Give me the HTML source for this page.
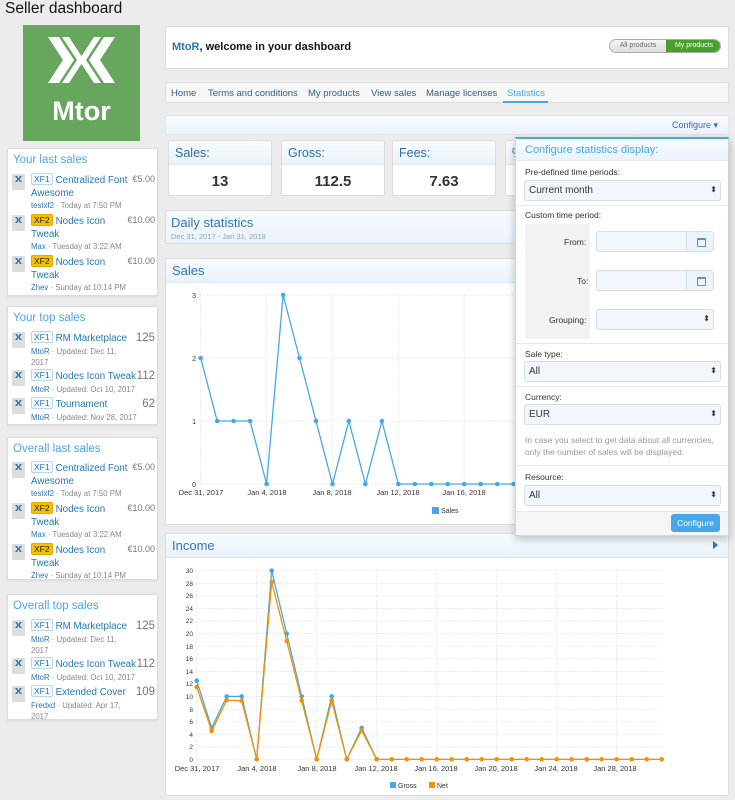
<!DOCTYPE html>
<html><head><meta charset="utf-8">
<style>
*{box-sizing:border-box;margin:0;padding:0}
body{width:735px;height:800px;background:#ececec;font-family:"Liberation Sans",sans-serif;position:relative;overflow:hidden;color:#141414}
.a{position:absolute}
.blk{position:absolute;left:7px;width:151px;background:#fff;border:1px solid #dcdcdc;border-radius:2px;box-shadow:0 1px 2px rgba(0,0,0,.08)}
.blk h3{font-weight:normal;font-size:11.5px;color:#47a7eb;position:absolute;left:5px;top:5px}
.it{position:absolute;left:4px;width:145px;font-size:9.8px;line-height:12.5px}
.ic{position:absolute;left:0;top:1px;width:13px;height:16px;background:#ddd;border-radius:1px}
.ic:before{content:"";position:absolute;left:3px;top:2px;width:7px;height:6px;background:#2f6fb5;clip-path:polygon(0 0,30% 0,50% 40%,70% 0,100% 0,65% 50%,100% 100%,70% 100%,50% 60%,30% 100%,0 100%,35% 50%)}
.bd{display:inline-block;font-size:8.5px;line-height:10px;padding:0 2px;border:1px solid #b8d6f0;border-radius:2px;color:#2d6ea8;background:#f4f9fe;margin-right:3px;vertical-align:1px}
.bd.y{background:#f6c000;border-color:#e0aa00;color:#222}
.tt{position:absolute;left:19px;top:0;width:98px;color:#2577b1}
.mt{color:#888;font-size:7.8px;line-height:11.5px;white-space:nowrap}
.mt b{font-weight:normal;color:#2577b1}
.pr{position:absolute;right:2px;top:0;color:#777;font-size:9px}
.pr.n{font-size:11.5px;top:1px}
.box{position:absolute;background:#fff;border:1px solid #dcdcdc;border-radius:2px}
.hd{background:linear-gradient(#f8fbfe,#e9f2fb);color:#2d76b3}
.nav span{position:absolute;top:5px;font-size:9.5px;color:#2d5f8a}
.sb{position:absolute;top:140px;width:104px;height:56px;background:#fff;border:1px solid #dcdcdc;border-radius:2px;overflow:hidden}
.sb .h{height:24px;background:linear-gradient(#f7fbfe,#e9f2fb);font-size:12.5px;color:#2d6ea8;padding:5px 6px;border-bottom:1px solid #e0e8f0}
.sb .v{text-align:center;font-size:15px;font-weight:bold;color:#333;padding-top:8px}
.pop{position:absolute;left:515px;top:137px;width:214px;height:399px;background:#fff;border:1px solid #cfd6dd;border-top:2px solid #47a7eb;box-shadow:0 3px 8px rgba(0,0,0,.25);font-size:8.5px;color:#333}
.pop .lb{position:absolute;left:9px}
.sel{position:absolute;left:8px;width:197px;height:21px;border:1px solid #d5dde5;border-radius:3px;background:#f1f6fc;font-size:10px;padding:4px 4px}
.sel:after{content:"⬍";position:absolute;right:3px;top:4px;font-size:8px;color:#333}
.sep{position:absolute;left:0;right:0;height:1px;background:#e3e8ed}
.inp{position:absolute;left:80px;width:118px;height:21px;border:1px solid #d5dde5;border-radius:3px;background:#f1f6fc}
.inp i{position:absolute;right:0;top:0;width:27px;height:19px;border-left:1px solid #d5dde5;background:#eef3f9}
.inp i:before{content:"";position:absolute;left:10px;top:6px;width:7px;height:6px;border:1px solid #5a90c8;border-top-width:2px;border-radius:1px}
.w{width:104px;white-space:nowrap}
</style></head><body>
<div class="a" style="left:5px;top:0;font-size:15.5px;color:#111">Seller dashboard</div>
<div class="a" style="left:23px;top:25px;width:117px;height:116px;background:#66a65d">
<svg width="117" height="70" viewBox="0 0 117 70" style="position:absolute;left:0;top:0">
<g fill="#fff">
<polygon points="25,12 36,12 51,35 36,58 25,58 40,35"/>
<polygon points="39,12 46,12 61,35 46,58 39,58 54,35"/>
<polygon points="92,12 81,12 66,35 81,58 92,58 77,35"/>
<polygon points="78,12 71,12 56,35 71,58 78,58 63,35"/>
</g></svg>
<div class="a" style="left:0;right:0;top:71px;text-align:center;color:#fff;font-weight:bold;font-size:27px">Mtor</div>
</div>

<div class="blk" style="top:148px;height:148px"><h3>Your last sales</h3>
<div class="it" style="top:24px"><div class="ic"></div><div class="tt"><span class="bd">XF1</span>Centralized Font<br>Awesome<div class="mt"><b>testxf2</b> · Today at 7:50 PM</div></div><div class="pr">€5.00</div></div>
<div class="it" style="top:65px"><div class="ic"></div><div class="tt"><span class="bd y">XF2</span>Nodes Icon<br>Tweak<div class="mt"><b>Max</b> · Tuesday at 3:22 AM</div></div><div class="pr">€10.00</div></div>
<div class="it" style="top:106px"><div class="ic"></div><div class="tt"><span class="bd y">XF2</span>Nodes Icon<br>Tweak<div class="mt"><b>Zhev</b> · Sunday at 10:14 PM</div></div><div class="pr">€10.00</div></div>
</div>
<div class="blk" style="top:306px;height:119px"><h3>Your top sales</h3>
<div class="it" style="top:24px"><div class="ic"></div><div class="tt w"><span class="bd">XF1</span>RM Marketplace<div class="mt"><b>MtoR</b> · Updated: Dec 11,<br>2017</div></div><div class="pr n">125</div></div>
<div class="it" style="top:62px"><div class="ic"></div><div class="tt w"><span class="bd">XF1</span>Nodes Icon Tweak<div class="mt"><b>MtoR</b> · Updated: Oct 10, 2017</div></div><div class="pr n">112</div></div>
<div class="it" style="top:90px"><div class="ic"></div><div class="tt w"><span class="bd">XF1</span>Tournament<div class="mt"><b>MtoR</b> · Updated: Nov 28, 2017</div></div><div class="pr n">62</div></div>
</div>
<div class="blk" style="top:437px;height:143px"><h3>Overall last sales</h3>
<div class="it" style="top:23px"><div class="ic"></div><div class="tt"><span class="bd">XF1</span>Centralized Font<br>Awesome<div class="mt"><b>testxf2</b> · Today at 7:50 PM</div></div><div class="pr">€5.00</div></div>
<div class="it" style="top:64px"><div class="ic"></div><div class="tt"><span class="bd y">XF2</span>Nodes Icon<br>Tweak<div class="mt"><b>Max</b> · Tuesday at 3:22 AM</div></div><div class="pr">€10.00</div></div>
<div class="it" style="top:105px"><div class="ic"></div><div class="tt"><span class="bd y">XF2</span>Nodes Icon<br>Tweak<div class="mt"><b>Zhev</b> · Sunday at 10:14 PM</div></div><div class="pr">€10.00</div></div>
</div>
<div class="blk" style="top:594px;height:126px"><h3>Overall top sales</h3>
<div class="it" style="top:24px"><div class="ic"></div><div class="tt w"><span class="bd">XF1</span>RM Marketplace<div class="mt"><b>MtoR</b> · Updated: Dec 11,<br>2017</div></div><div class="pr n">125</div></div>
<div class="it" style="top:62px"><div class="ic"></div><div class="tt w"><span class="bd">XF1</span>Nodes Icon Tweak<div class="mt"><b>MtoR</b> · Updated: Oct 10, 2017</div></div><div class="pr n">112</div></div>
<div class="it" style="top:90px"><div class="ic"></div><div class="tt w"><span class="bd">XF1</span>Extended Cover<div class="mt"><b>Fredxd</b> · Updated: Apr 17,<br>2017</div></div><div class="pr n">109</div></div>
</div>

<div class="box" style="left:165px;top:26px;width:564px;height:43px">
<div class="a" style="left:6px;top:14px;font-size:11px;font-weight:bold"><span style="color:#2577b1">MtoR</span>, welcome in your dashboard</div>
<div class="a" style="left:443px;top:12px;width:112px;height:14px;border-radius:7px;border:1px solid #aaa;overflow:hidden;font-size:7px">
<div class="a" style="left:0;top:0;width:56px;height:12px;background:linear-gradient(#f5f5f5,#ddd);color:#666;text-align:center;line-height:12px">All products</div>
<div class="a" style="left:56px;top:0;width:56px;height:12px;background:#4aa02c;color:#fff;text-align:center;line-height:12px">My products</div></div>
</div>
<div class="box nav" style="left:165px;top:82px;width:564px;height:21px;background:#f7f7f7">
<span style="left:5px">Home</span><span style="left:42px">Terms and conditions</span><span style="left:142px">My products</span><span style="left:205px">View sales</span><span style="left:260px">Manage licenses</span><span style="left:341px;color:#47a7eb">Statistics</span>
<div class="a" style="left:337px;top:18px;width:45px;height:2px;background:#47a7eb"></div></div>
<div class="box" style="left:165px;top:115px;width:564px;height:20px;background:linear-gradient(#f8fbfe,#eaf2fb);border-color:#e0e6ec">
<div class="a" style="right:10px;top:4px;font-size:9px;color:#2d6ea8">Configure ▾</div></div>

<div class="sb" style="left:168px"><div class="h">Sales:</div><div class="v">13</div></div>
<div class="sb" style="left:281px"><div class="h">Gross:</div><div class="v">112.5</div></div>
<div class="sb" style="left:392px"><div class="h">Fees:</div><div class="v">7.63</div></div>
<div class="sb" style="left:505px"><div class="h">%</div><div class="v"></div></div>

<div class="box hd" style="left:165px;top:210px;width:564px;height:34px">
<div class="a" style="left:5px;top:4px;font-size:13px">Daily statistics</div>
<div class="a" style="left:5px;top:21px;font-size:7.5px;color:#8aa">Dec 31, 2017 - Jan 31, 2018</div></div>

<div class="box" style="left:165px;top:258px;width:564px;height:267px">
<div class="hd" style="height:24px;border-bottom:1px solid #e0e8f0;font-size:13px;padding:4px 6px">Sales</div></div>
<div class="box" style="left:165px;top:533px;width:564px;height:263px">
<div class="hd" style="height:24px;border-bottom:1px solid #e0e8f0;font-size:13px;padding:4px 6px">Income</div>
<div class="a" style="right:10px;top:7px;width:0;height:0;border-left:5px solid #2d76b3;border-top:4px solid transparent;border-bottom:4px solid transparent"></div></div>

<svg class="a" style="left:0;top:0" width="735" height="800" font-family="Liberation Sans" font-size="7" fill="#333">
<defs>
<marker id="mb" markerWidth="5" markerHeight="5" refX="2.5" refY="2.5" markerUnits="userSpaceOnUse"><circle cx="2.5" cy="2.5" r="2.3" fill="#47a7eb"/></marker>
<marker id="mo" markerWidth="5" markerHeight="5" refX="2.5" refY="2.5" markerUnits="userSpaceOnUse"><circle cx="2.5" cy="2.5" r="2.3" fill="#f39200"/></marker>
</defs>
<g stroke="#ddd" stroke-dasharray="1.5,1.5" stroke-width="0.7">
<path d="M200 295H712M200 358H712M200 421H712M200 484H712M200.7 295V484M266.6 295V484M332.5 295V484M398.3 295V484M464.2 295V484M530 295V484"/>
<path d="M196 570.7H662M196 583.3H662M196 595.9H662M196 608.5H662M196 621.1H662M196 633.6H662M196 646.2H662M196 658.8H662M196 671.4H662M196 684H662M196 696.6H662M196 709.2H662M196 721.8H662M196 734.3H662M196 746.9H662M196 759.3H662"/>
<path d="M196.7 570V760M256.7 570V760M316.7 570V760M376.7 570V760M436.7 570V760M496.7 570V760M556.7 570V760M616.7 570V760"/>
</g>
<g text-anchor="end"><text x="196" y="298">3</text><text x="196" y="361">2</text><text x="196" y="424">1</text><text x="196" y="487">0</text></g>
<g text-anchor="middle" font-size="7.5"><text x="201" y="495">Dec 31, 2017</text><text x="267" y="495">Jan 4, 2018</text><text x="332" y="495">Jan 8, 2018</text><text x="398" y="495">Jan 12, 2018</text><text x="464" y="495">Jan 16, 2018</text></g>
<rect x="432" y="507" width="7" height="7" fill="#47a7eb"/><text x="441" y="513">Sales</text>
<polyline fill="none" stroke="#47a7eb" stroke-width="1.3" marker-start="url(#mb)" marker-mid="url(#mb)" marker-end="url(#mb)" points="200.7,358 217.2,421 233.6,421 250.1,421 266.6,484 283.1,295 299.5,358 316,421 332.5,484 348.9,421 365.4,484 381.9,421 398.3,484 414.8,484 431.3,484 447.7,484 464.2,484 480.7,484 497.2,484 513.6,484 530,484"/>
<g text-anchor="end" font-size="6.5"><text x="193" y="573">30</text><text x="193" y="586">28</text><text x="193" y="598">26</text><text x="193" y="611">24</text><text x="193" y="623">22</text><text x="193" y="636">20</text><text x="193" y="649">18</text><text x="193" y="661">16</text><text x="193" y="674">14</text><text x="193" y="686">12</text><text x="193" y="699">10</text><text x="193" y="712">8</text><text x="193" y="724">6</text><text x="193" y="737">4</text><text x="193" y="749">2</text><text x="193" y="762">0</text></g>
<g text-anchor="middle" font-size="7.5"><text x="197" y="771">Dec 31, 2017</text><text x="257" y="771">Jan 4, 2018</text><text x="317" y="771">Jan 8, 2018</text><text x="376" y="771">Jan 12, 2018</text><text x="436" y="771">Jan 16, 2018</text><text x="496" y="771">Jan 20, 2018</text><text x="556" y="771">Jan 24, 2018</text><text x="615" y="771">Jan 28, 2018</text></g>
<rect x="390" y="782" width="6" height="6" fill="#47a7eb"/><text x="398" y="788">Gross</text>
<rect x="429" y="782" width="6" height="6" fill="#f39200"/><text x="437" y="788">Net</text>
<polyline fill="none" stroke="#47a7eb" stroke-width="1.3" marker-start="url(#mb)" marker-mid="url(#mb)" marker-end="url(#mb)" points="196.7,680.7 211.7,727.9 226.7,696.4 241.7,696.4 256.7,759.3 271.7,570.7 286.7,633.6 301.7,696.4 316.7,759.3 331.7,696.4 346.7,759.3 361.7,727.9 376.7,759.3"/>
<polyline fill="none" stroke="#f39200" stroke-width="1.3" marker-start="url(#mo)" marker-mid="url(#mo)" marker-end="url(#mo)" points="196.7,687 211.7,731 226.7,700.2 241.7,700.8 256.7,759.3 271.7,582 286.7,641.1 301.7,700.8 316.7,759.3 331.7,700.8 346.7,759.3 361.7,730.4 376.7,759.3 391.7,759.3 406.7,759.3 421.7,759.3 436.7,759.3 451.7,759.3 466.7,759.3 481.7,759.3 496.7,759.3 511.7,759.3 526.7,759.3 541.7,759.3 556.7,759.3 571.7,759.3 586.7,759.3 601.7,759.3 616.7,759.3 631.7,759.3 646.7,759.3 661.7,759.3"/>
</svg>

<div class="pop">
<div class="a" style="left:0;right:0;top:0;height:22px;background:linear-gradient(#f8fbfe,#eaf2fb);border-bottom:1px solid #e0e8f0;color:#47a7eb;font-size:11px;padding:5px 9px">Configure statistics display:</div>
<div class="lb" style="top:28px">Pre-defined time periods:</div>
<div class="sel" style="top:41px">Current month</div>
<div class="sep" style="top:66px"></div>
<div class="lb" style="top:71px">Custom time period:</div>
<div class="a" style="left:9px;top:85px;width:65px;height:115px;background:#f2f2f2"></div>
<div class="lb" style="top:98px;left:48px">From:</div>
<div class="inp" style="top:92px"><i></i></div>
<div class="lb" style="top:137px;left:61px">To:</div>
<div class="inp" style="top:131px"><i></i></div>
<div class="lb" style="top:176px;left:33px">Grouping:</div>
<div class="sel" style="top:170px;left:80px;width:118px"></div>
<div class="sep" style="top:204px"></div>
<div class="lb" style="top:210px">Sale type:</div>
<div class="sel" style="top:222px">All</div>
<div class="sep" style="top:247px"></div>
<div class="lb" style="top:253px">Currency:</div>
<div class="sel" style="top:265px">EUR</div>
<div class="lb" style="top:295px;width:200px;color:#999;line-height:12px">In case you select to get data about all currencies, only the number of sales will be displayed.</div>
<div class="sep" style="top:326px"></div>
<div class="lb" style="top:333px">Resource:</div>
<div class="sel" style="top:346px">All</div>
<div class="a" style="left:0;right:0;top:372px;bottom:0;background:#f5f5f5;border-top:1px solid #e3e8ed"></div>
<div class="a" style="right:8px;top:375px;width:49px;height:18px;background:#47a7eb;border-radius:3px;color:#fff;font-size:8.5px;text-align:center;line-height:18px">Configure</div>
</div>
</body></html>
